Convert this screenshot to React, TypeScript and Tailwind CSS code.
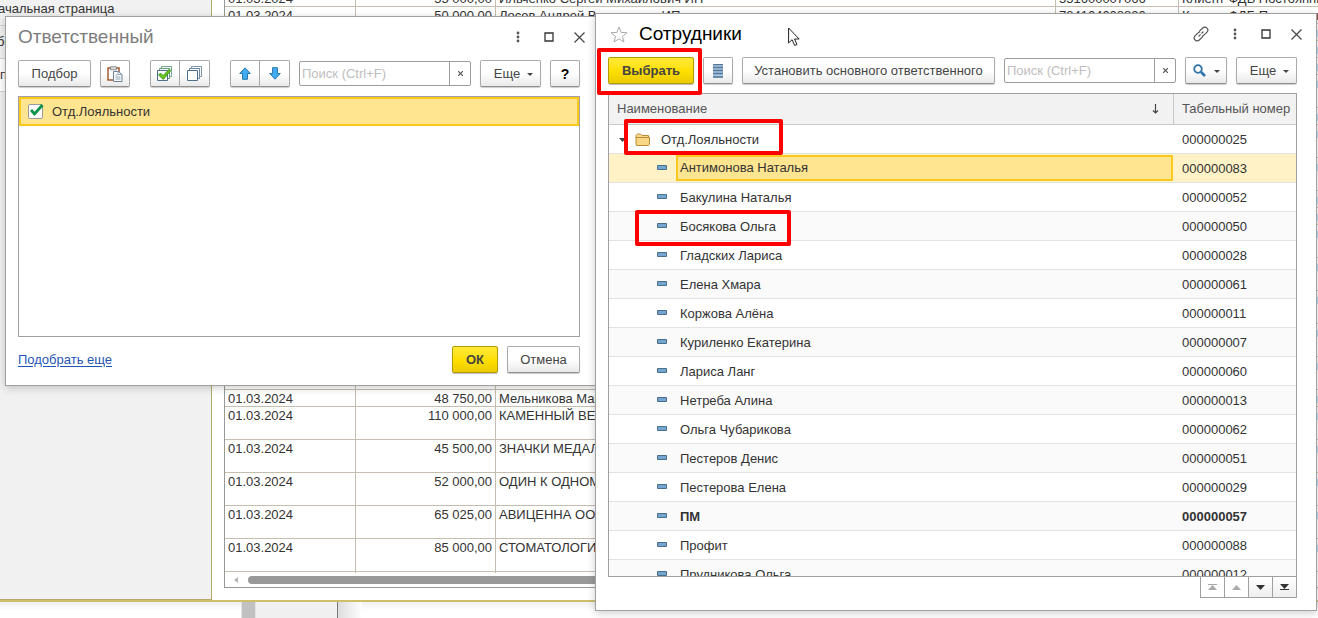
import type { ReactNode } from "react";

const employees = [
  ["Антимонова Наталья", "000000083"],
  ["Бакулина Наталья", "000000052"],
  ["Босякова Ольга", "000000050"],
  ["Гладских Лариса", "000000028"],
  ["Елена Хмара", "000000061"],
  ["Коржова Алёна", "000000011"],
  ["Куриленко Екатерина", "000000007"],
  ["Лариса Ланг", "000000060"],
  ["Нетреба Алина", "000000013"],
  ["Ольга Чубарикова", "000000062"],
  ["Пестеров Денис", "000000051"],
  ["Пестерова Елена", "000000029"],
  ["ПМ", "000000057"],
  ["Профит", "000000088"],
  ["Прудникова Ольга", "000000012"],
];

type Payment = { tall?: boolean; date?: string; sum?: string; name?: string; inn?: string; kind?: string };

const date = "01.03.2024";
const kind = "Клиент ФДБ Постоянный";

const payments: Payment[] = [
  { date, kind, sum: "55 000,00", name: "Ильченко Сергей Михайлович ИП", inn: "551600007066" },
  { date, kind, sum: "50 000,00", name: "Лосев Андрей Викторович ИП", inn: "784104008820" },
  {},
  {},
  {},
  { tall: true },
  {},
  { tall: true },
  { tall: true },
  {},
  {},
  { tall: true },
  { tall: true },
  { tall: true },
  { tall: true },
  { tall: true },
  { date, sum: "48 750,00", name: "Мельникова Мария" },
  { tall: true, date, sum: "110 000,00", name: "КАМЕННЫЙ ВЕК" },
  { tall: true, date, sum: "45 500,00", name: "ЗНАЧКИ МЕДАЛИ" },
  { tall: true, date, sum: "52 000,00", name: "ОДИН К ОДНОМУ" },
  { tall: true, date, sum: "65 025,00", name: "АВИЦЕННА ООО" },
  { tall: true, date, sum: "85 000,00", name: "СТОМАТОЛОГИЧ" },
  { tall: true },
];

const plain =
  "flex h-[27px] shrink-0 items-center justify-center rounded-[2px] border border-[#ababab] border-b-[#8f8f8f] bg-linear-to-b from-white from-50% to-[#e9e9e9] text-[#444] shadow-[0_1px_1px_#0003]";
const gold =
  "flex h-[27px] shrink-0 items-center justify-center rounded-[2px] border border-[#b39c00] bg-linear-to-b from-[#ffe935] via-[#ffe000] to-[#ebcb00] font-bold text-[#444] shadow-[0_1px_1px_#0004]";

function Btn({ className, label, children }: { className: string; label?: string; children: ReactNode }) {
  return (
    <button type="button" aria-label={label} className={`${plain} ${className}`}>
      {children}
    </button>
  );
}

function Caret() {
  return (
    <svg width="6" height="3" viewBox="0 0 6 3" className="mt-[2px]">
      <path d="M0 0h6L3 3z" fill="#444" />
    </svg>
  );
}

function Search() {
  return (
    <div className="flex h-[25px] w-[172px] shrink-0 rounded-[2px] border border-[#9c9c9c] bg-white">
      <input
        type="text"
        aria-label="Поиск"
        placeholder="Поиск (Ctrl+F)"
        className="min-w-0 flex-1 px-[2px] outline-none placeholder:text-[#bebebe]"
      />
      <button type="button" aria-label="Очистить" className="flex w-[21px] items-center justify-center border-l border-[#9c9c9c]">
        <svg width="5" height="5" viewBox="0 0 5 5">
          <path d="M0 0l5 5M5 0L0 5" stroke="#555" strokeWidth="1.2" />
        </svg>
      </button>
    </div>
  );
}

function WindowControls() {
  return (
    <>
      <button type="button" aria-label="Действия">
        <svg width="4" height="12" viewBox="0 0 4 12" fill="#555">
          <circle cx="2" cy="2" r="1.4" />
          <circle cx="2" cy="6" r="1.4" />
          <circle cx="2" cy="10" r="1.4" />
        </svg>
      </button>
      <button type="button" aria-label="Развернуть" className="ml-[24px]">
        <svg width="10" height="10" viewBox="0 0 10 10">
          <path d="M1 1h8v8H1z" fill="none" stroke="#333" strokeWidth="1.3" />
        </svg>
      </button>
      <button type="button" aria-label="Закрыть" className="ml-[20px]">
        <svg width="11" height="11" viewBox="0 0 11 11">
          <path d="M.5.5l10 10M10.5.5l-10 10" stroke="#444" strokeWidth="1.2" />
        </svg>
      </button>
    </>
  );
}

function Sheets({ checked }: { checked?: boolean }) {
  return (
    <svg width="16" height="16" viewBox="0 0 16 16">
      <g fill="#f4f8fa">
        <path d="M4.500.5h10v10h-10z" stroke={checked ? "#7aa78f" : "#8197aa"} />
        <path d="M2.500 2.500h10v10h-10z" stroke={checked ? "#6a9b80" : "#72899d"} />
        <path d="M.5 4.500h10v10H.5z" fill="#fff" stroke="#4f6e89" />
      </g>
      {checked && <path d="M1.500 9l2-2 2.500 2.500L12.500 3l1 2L6.300 13.500z" fill="#69c51e" stroke="#2d8b15" strokeWidth=".8" />}
    </svg>
  );
}

function BlueArrow({ down }: { down?: boolean }) {
  return (
    <svg width="12" height="13" viewBox="0 0 12 13" className={down ? "rotate-180" : ""}>
      <path d="M6 .8l5.300 5.700H8.500v5.800h-5V6.500H.7z" fill="#41aaf0" stroke="#2c79ae" strokeLinejoin="round" />
    </svg>
  );
}

function Dash() {
  return (
    <svg width="10" height="5" viewBox="0 0 10 5" className="mb-[2px] shrink-0">
      <path d="M.5.5h9v4h-9z" fill="#75a5cf" stroke="#46708e" />
    </svg>
  );
}

function Paste() {
  return (
    <svg width="16" height="16" viewBox="0 0 16 16">
      <path d="M1 2h11v12H1z" fill="#fff" stroke="#a4592d" strokeWidth="1.500" />
      <path d="M3.500.8h6v3h-6z" fill="#ddd" stroke="#777" strokeWidth=".8" />
      <path d="M6.500 5.500h5l3.500 3v7H6.500z" fill="#fff" stroke="#68839a" />
      <path d="M11 5.500v3h4M8.500 9h2M8.500 11h5M8.500 13h5" fill="none" stroke="#7f98ab" strokeWidth=".9" />
    </svg>
  );
}

function Background() {
  return (
    <div className="flex h-full flex-col bg-white">
      <div className="flex min-h-0 flex-1 border-b-2 border-[#cdbf6b]">
        <nav className="w-[212px] shrink-0 border-r border-b border-[#b5a96a] bg-[#f1f1f1] text-[#333]">
          <div className="flex h-[26px] items-center overflow-hidden border-b border-[#d2d2d2] pb-[7px]">
            <span className="-ml-[2px]">ачальная страница</span>
          </div>
          <div className="flex h-[33px] items-center overflow-hidden border-b border-[#d2d2d2]">
            <span className="-ml-[3px]">бо</span>
          </div>
          <div className="flex h-[33px] items-center border-b border-[#d2d2d2] bg-white">п</div>
        </nav>
        <div className="min-w-0 flex-1 pb-[12px] pl-[12px]">
          <div className="flex h-full flex-col border-b border-l border-[#999]">
            <div className="min-h-0 flex-1 overflow-hidden">
              <table className="-mt-[10px] w-full table-fixed border-separate border-spacing-0 leading-[15px] text-[#333]">
                <colgroup>
                  <col className="w-[131px]" />
                  <col className="w-[140px]" />
                  <col className="w-[560px]" />
                  <col className="w-[123px]" />
                  <col />
                </colgroup>
                <tbody>
                  {payments.map((p, i) => (
                    <tr
                      key={i}
                      className={
                        p.tall
                          ? "h-[33px] align-top *:border-b *:border-[#c5bdae] *:pt-px"
                          : "h-[17px] align-top *:border-b *:border-[#c5bdae] *:pt-px"
                      }
                    >
                      <td className="border-r px-[3px]">{p.date}</td>
                      <td className="border-r px-[3px] text-right">{p.sum}</td>
                      <td className="overflow-hidden border-r px-[3px] whitespace-nowrap">{p.name}</td>
                      <td className="border-r px-[3px]">{p.inn}</td>
                      {p.kind ? (
                        <td className="overflow-hidden px-[3px] whitespace-nowrap">{p.kind}</td>
                      ) : (
                        <td className="text-right">н</td>
                      )}
                    </tr>
                  ))}
                </tbody>
              </table>
            </div>
            <div className="flex h-[14px] shrink-0 items-center bg-white pl-[9px]">
              <svg width="4" height="6" viewBox="0 0 4 6">
                <path d="M4 0v6L0 3z" fill="#b5b5b5" />
              </svg>
              <div className="ml-[10px] h-[8px] w-[700px] rounded-full bg-[#999]" />
            </div>
          </div>
        </div>
      </div>
      <div className="flex h-[16px] shrink-0">
        <div className="w-[241px] bg-linear-to-b from-[#eee] to-white to-50%" />
        <div className="w-[15px] border-x border-[#e4e4e4] bg-[#c1c1c1]" />
        <div className="w-[82px] border-r border-[#777] bg-[#f0f0f0]" />
        <div className="w-[24px] bg-linear-to-r from-[#ddd] to-white" />
        <div className="flex-1 bg-linear-to-b from-[#f0f0f0] to-white to-50%" />
      </div>
    </div>
  );
}

function ResponsibleWindow() {
  return (
    <section className="absolute top-[16px] left-[5px] w-[591px] border border-[#a0a0a0] bg-white pr-[10px] pb-[12px] pl-[12px] shadow-[0_2px_8px_#0003]">
      <header className="flex h-[43px] items-center pb-[3px]">
        <h1 className="flex-1 text-[19px] text-[#7d7d7d]">Ответственный</h1>
        <WindowControls />
      </header>
      <div className="flex items-center pr-[5px]">
        <Btn className="w-[73px]">Подбор</Btn>
        <Btn label="Вставить" className="ml-[9px] w-[30px]"><Paste /></Btn>
        <div className="ml-[20px] flex">
          <Btn label="Установить флажки" className="w-[30px] rounded-r-none"><Sheets checked /></Btn>
          <Btn label="Снять флажки" className="w-[30px] rounded-l-none border-l-0"><Sheets /></Btn>
        </div>
        <div className="ml-[20px] flex">
          <Btn label="Вверх" className="w-[30px] rounded-r-none"><BlueArrow /></Btn>
          <Btn label="Вниз" className="w-[30px] rounded-l-none border-l-0"><BlueArrow down /></Btn>
        </div>
        <div className="mr-[9px] ml-[9px]"><Search /></div>
        <Btn className="w-[61px] gap-[7px] pl-[6px]">Еще<Caret /></Btn>
        <Btn label="Справка" className="ml-[9px] w-[30px]"><b className="text-[14px] text-black">?</b></Btn>
      </div>
      <div className="mt-[9px] mr-[5px] h-[241px] border border-[#a0a0a0]">
        <label className="flex h-[29px] items-center border-2 border-[#fac81e] bg-[#ffe58f] text-[#333]">
          <span className="relative ml-[7px] h-[15px] w-[15px]">
            <input type="checkbox" defaultChecked className="peer block h-[15px] w-[15px] appearance-none rounded-[2px] border border-[#999] bg-white" />
            <svg width="14" height="13" viewBox="0 0 14 13" className="pointer-events-none absolute top-0 left-[2px] hidden peer-checked:block">
              <path d="M1 6l3.500 4L12.500 1" fill="none" stroke="#079447" strokeWidth="2.800" />
            </svg>
          </span>
          <span className="ml-[9px]">Отд.Лояльности</span>
        </label>
      </div>
      <footer className="mt-[9px] mr-[5px] flex items-center">
        <a href="#more" className="text-[#1f56b5] underline underline-offset-2">Подобрать еще</a>
        <button type="button" className={`${gold} ml-auto w-[46px]`}>ОК</button>
        <Btn className="ml-[9px] w-[73px]">Отмена</Btn>
      </footer>
    </section>
  );
}

function EmployeesWindow() {
  return (
    <section className="absolute top-[13px] right-px bottom-[7px] left-[595px] flex flex-col border border-[#a0a0a0] bg-white px-[12px] pb-[12px] shadow-[0_2px_8px_#0003]">
      <header className="flex h-[43px] shrink-0 items-center pr-[2px] pb-[3px]">
        <button type="button" aria-label="В избранное" className="ml-[2px]">
          <svg width="18" height="17" viewBox="0 0 18 17">
            <path d="M9 1l2.100 5.400 5.900.3-4.600 3.700 1.600 5.600L9 12.800 4 16l1.600-5.600L1 6.700l5.900-.3z" fill="none" stroke="#aaa" />
          </svg>
        </button>
        <h2 className="ml-[11px] flex-1 text-[19px] text-black">Сотрудники</h2>
        <button type="button" aria-label="Получить ссылку" className="mr-[24px]">
          <svg width="16" height="16" viewBox="0 0 16 16" fill="none" stroke="#555" strokeWidth="1.200" strokeLinecap="round">
            <path d="M6.500 5.200l3.200-3.200a2.900 2.900 0 0 1 4.300.1 2.900 2.900 0 0 1 0 4L10.900 9.200a2.700 2.700 0 0 1-1.600.8M9.500 10.800L6.300 14a2.900 2.900 0 0 1-4.300-.1 2.900 2.900 0 0 1 0-4L5.100 6.800a2.700 2.700 0 0 1 1.600-.8M6 10l1.200-1.200M8.800 7.200L10 6" />
          </svg>
        </button>
        <WindowControls />
      </header>
      <div className="flex shrink-0 items-center gap-[9px] pr-[7px]">
        <button type="button" className={`${gold} w-[86px]`}>Выбрать</button>
        <Btn label="Список" className="w-[30px]">
          <svg width="10" height="14" viewBox="0 0 10 14">
            <path d="M0 0h10v14H0z" fill="#a9c5dc" />
            <path d="M0 .5h10M0 3.500h10M0 6.500h10M0 9.500h10M0 13h10" stroke="#54799a" strokeWidth="1.300" />
          </svg>
        </Btn>
        <Btn className="w-[253px]">Установить основного ответственного</Btn>
        <Search />
        <Btn label="Найти" className="w-[42px] gap-[8px]">
          <svg width="13" height="13" viewBox="0 0 13 13" fill="none" stroke="#3174aa">
            <circle cx="5" cy="5" r="3.800" strokeWidth="1.800" />
            <path d="M8 8l4 4" strokeWidth="2.600" />
          </svg>
          <Caret />
        </Btn>
        <Btn className="w-[61px] gap-[7px] pl-[6px]">Еще<Caret /></Btn>
      </div>
      <div className="mt-[9px] mr-[7px] min-h-0 flex-1 overflow-hidden border border-[#a0a0a0]">
        <table className="w-full table-fixed border-separate border-spacing-0 text-left leading-4 text-[#333]">
          <colgroup>
            <col />
            <col className="w-[122px]" />
          </colgroup>
          <thead>
            <tr className="h-[31px] text-[#555] *:border-b *:border-[#c8c8c8] *:bg-[#f2f2f2] *:font-normal">
              <th className="border-r px-[8px]">
                <span className="flex items-center justify-between">
                  Наименование
                  <svg width="7" height="10" viewBox="0 0 7 10" className="mr-[6px]">
                    <path d="M3.500 0v9M1 6.500L3.500 9 6 6.500" fill="none" stroke="#444" strokeWidth="1.200" />
                  </svg>
                </span>
              </th>
              <th className="pl-[8px] whitespace-nowrap">Табельный номер</th>
            </tr>
          </thead>
          <tbody>
            <tr className="h-[29px] *:border-b *:border-[#e3e3e3]">
              <td className="pt-px">
                <span className="flex items-center pl-[10px]">
                  <svg width="7" height="4" viewBox="0 0 7 4"><path d="M0 0h7L3.500 4z" fill="#444" /></svg>
                  <svg width="16" height="13" viewBox="0 0 16 13" className="ml-[9px]">
                    <path d="M1 11V2.500L2.500 1h3L7 2.500h6.500v2h1v7l-1 1h-12z" fill="#f8d787" stroke="#b88c35" />
                    <path d="M1 4.500h13.500" stroke="#b88c35" />
                  </svg>
                  <span className="ml-[10px]">Отд.Лояльности</span>
                </span>
              </td>
              <td className="pt-px pl-[8px]">000000025</td>
            </tr>
            {employees.map(([name, number], i) => (
              <tr
                key={number}
                className={
                  i === 0
                    ? "h-[29px] *:border-b *:border-[#e3e3e3] *:bg-[#fff2c6]"
                    : name === "ПМ"
                      ? "h-[29px] bg-[#fafafa] font-bold *:border-b *:border-[#e3e3e3]"
                      : "h-[29px] odd:bg-[#fafafa] even:bg-[#fafafa] *:border-b *:border-[#e3e3e3] nth-[2n+1]:bg-white"
                }
              >
                <td className={i === 0 ? "pl-[48px]" : "pt-px pl-[48px]"}>
                  <span className="flex items-center gap-[9px]">
                    <Dash />
                    <span className={i === 0 ? "mr-px flex h-[26px] flex-1 items-center border-2 border-[#fac81e] bg-[#ffe58f] pl-[2px]" : "pl-[4px]"}>{name}</span>
                  </span>
                </td>
                <td className="pt-px pl-[8px]">{number}</td>
              </tr>
            ))}
          </tbody>
        </table>
      </div>
      <div className="mr-[7px] ml-auto flex h-[21px] shrink-0 border-b border-l border-[#a0a0a0] *:flex *:w-[24px] *:items-center *:justify-center *:border-r *:border-[#a0a0a0]">
        <button type="button" aria-label="В начало" disabled>
          <svg width="9" height="7" viewBox="0 0 9 7" fill="#aaa"><path d="M0 0h9v1H0zM4.500 1L9 6H0z" /></svg>
        </button>
        <button type="button" aria-label="Предыдущая" disabled>
          <svg width="9" height="5" viewBox="0 0 9 5" fill="#aaa"><path d="M4.500 0L9 5H0z" /></svg>
        </button>
        <button type="button" aria-label="Следующая" className="bg-linear-to-b from-white to-[#eee]">
          <svg width="9" height="5" viewBox="0 0 9 5" fill="#333"><path d="M0 0h9L4.500 5z" /></svg>
        </button>
        <button type="button" aria-label="В конец" className="bg-linear-to-b from-white to-[#eee]">
          <svg width="9" height="7" viewBox="0 0 9 7" fill="#333"><path d="M0 0h9L4.500 5zM0 5h9v1H0z" /></svg>
        </button>
      </div>
    </section>
  );
}

export default function App() {
  return (
    <main className="relative h-screen overflow-hidden font-['Liberation_Sans',Arial,sans-serif] text-[13px] leading-4">
      <Background />
      <ResponsibleWindow />
      <EmployeesWindow />
      <div className="pointer-events-none absolute top-[48px] left-[597px] h-[47px] w-[105px] rounded-[2px] border-4 border-[#fe0000]" />
      <div className="pointer-events-none absolute top-[119px] left-[624px] h-[36px] w-[159px] rounded-[2px] border-4 border-[#fe0000]" />
      <div className="pointer-events-none absolute top-[210px] left-[635px] h-[36px] w-[156px] rounded-[2px] border-4 border-[#fe0000]" />
      <svg width="13" height="20" viewBox="0 0 13 20" className="pointer-events-none absolute top-[27px] left-[788px]">
        <path d="M.6 1v15l3.500-3.300 2.600 5.800 2.300-1-2.500-5.500h4.700z" fill="#fff" stroke="#222" />
      </svg>
    </main>
  );
}
